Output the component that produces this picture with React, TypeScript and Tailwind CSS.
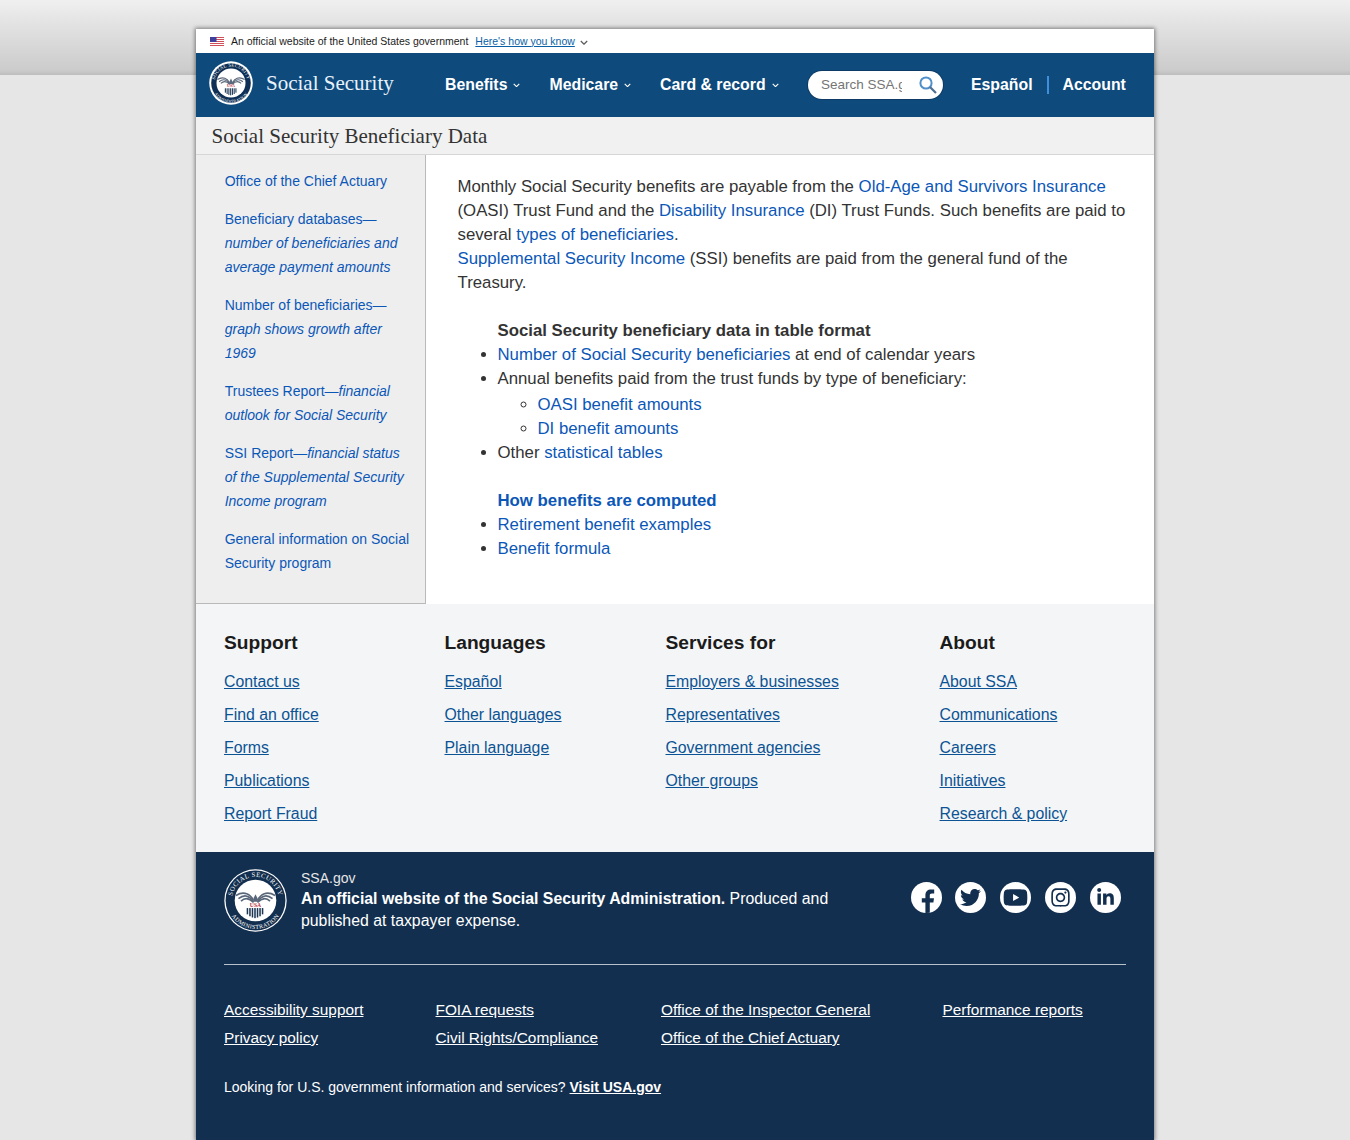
import React from "react";
import { FaTwitter, FaYoutube, FaInstagram, FaLinkedinIn } from "react-icons/fa";

const sans = "font-['Liberation_Sans',Arial,sans-serif]";
const serif = "font-['Liberation_Serif','Times_New_Roman',serif]";
const A = ({ children }: { children: React.ReactNode }) => (
  <a href="#" className="text-[#0b57b8]">{children}</a>
);

function Seal({ size, outer, small }: { size: number; outer: string; small?: boolean }) {
  const top = small ? "sealTopS" : "sealTop";
  const bot = small ? "sealBotS" : "sealBot";
  const feathers = [
    "M47 50 C42 40 32 34 19 42",
    "M47 52 C41 43 33 39 23 47",
    "M47 53 C41 47 34 44 27 51",
    "M53 50 C58 40 68 34 81 42",
    "M53 52 C59 43 67 39 77 47",
    "M53 53 C59 47 66 44 73 51",
  ];
  return (
    <svg width={size} height={size} viewBox="0 0 100 100" className="shrink-0">
      <circle cx="50" cy="50" r="49.5" fill="#fff" />
      <circle cx="50" cy="50" r={small ? 45 : 47.5} fill={outer} />
      <circle cx="50" cy="50" r="33" fill="#fff" />
      <defs>
        <path id={top} d="M 12.5 50 A 37.5 37.5 0 0 1 87.5 50" />
        <path id={bot} d="M 5 50 A 45 45 0 0 0 95 50" />
      </defs>
      <text fontSize="10.5" fill="#fff" fontFamily="'Liberation Serif',serif" letterSpacing="0.8">
        <textPath href={`#${top}`} startOffset="50%" textAnchor="middle">SOCIAL SECURITY</textPath>
      </text>
      <text fontSize="9.5" fill="#fff" fontFamily="'Liberation Serif',serif" letterSpacing="0.6">
        <textPath href={`#${bot}`} startOffset="50%" textAnchor="middle">ADMINISTRATION</textPath>
      </text>
      <g fill="none" stroke="#59677a" strokeWidth="2.6">
        {feathers.map((d) => <path key={d} d={d} />)}
      </g>
      <path d="M47 46 L50 40 L53 46 L53 52 L47 52 Z" fill="#59677a" />
      <text x="50" y="60" fontSize="9" fontWeight="700" textAnchor="middle" fill="#b3303f" fontFamily="'Liberation Serif',serif">USA</text>
      <g fill="#1c3554">
        <rect x="36" y="62" width="2.4" height="10" />
        <rect x="40" y="62" width="2.4" height="13" />
        <rect x="44" y="62" width="2.4" height="15" />
        <rect x="48" y="62" width="2.4" height="16" />
        <rect x="52" y="62" width="2.4" height="15" />
        <rect x="56" y="62" width="2.4" height="13" />
        <rect x="60" y="62" width="2.4" height="10" />
      </g>
    </svg>
  );
}

function Flag() {
  return (
    <svg width="14" height="10" viewBox="0 0 14 10" className="shrink-0">
      <rect width="14" height="10" fill="#fff" />
      {[0, 2, 4, 6, 8].map((y) => (
        <rect key={y} y={y} width="14" height="1" fill="#d0505a" />
      ))}
      <rect width="6.5" height="5" fill="#3f3f9e" />
    </svg>
  );
}

function Chevron({ color = "#fff", w = 7 }: { color?: string; w?: number }) {
  return (
    <svg width={w} height={w * 0.7} viewBox="0 0 10 7" fill="none" className="shrink-0">
      <path d="M1 1.2 L5 5.2 L9 1.2" stroke={color} strokeWidth="1.6" />
    </svg>
  );
}

const NavItem = ({ label, cls }: { label: string; cls: string }) => (
  <a href="#" className={`flex items-center gap-[6px] text-white font-bold text-[15.84px] ${cls}`}>
    {label}
    <Chevron />
  </a>
);

const Col = ({ title, links, w }: { title: string; links: string[]; w: string }) => (
  <div className={w}>
    <h3 className="text-[19.2px] font-bold leading-[24px] text-[#1b1b1b] mb-[10px]">{title}</h3>
    <ul className="flex flex-col">
      {links.map((l) => (
        <li key={l} className="leading-[33px] text-[15.84px]">
          <a href="#" className="underline text-[#0b5394]">{l}</a>
        </li>
      ))}
    </ul>
  </div>
);

const Social = ({ children }: { children: React.ReactNode }) => (
  <a href="#" className="w-[31px] h-[31px] rounded-full bg-white flex items-center justify-center text-[#132f4f] overflow-hidden">
    {children}
  </a>
);

export default function App() {
  return (
    <div className={`${sans} min-h-[1140px] bg-[#e6e6e6] bg-[linear-gradient(#f0f0f0_0,#e2e2e2_25px,#cccccc_70px,#bdbdbd_75px)] bg-no-repeat bg-[length:100%_75px] pt-[29px]`}>
      <div className="w-[958px] h-[1111px] mx-auto bg-white shadow-[0_0_4px_1px_rgba(0,0,0,0.45)] flex flex-col overflow-hidden">
        {/* gov banner */}
        <div className="h-[24px] bg-white flex items-center pl-[14px] pt-[1px] text-[10.5px] text-[#1b1b1b] shrink-0">
          <Flag />
          <span className="ml-[7px]">An official website of the United States government</span>
          <a href="#" className="ml-[7px] underline text-[#0b5fa5]">Here's how you know</a>
          <span className="ml-[5px] translate-y-[1px]"><Chevron color="#5c5c5c" w={8} /></span>
        </div>

        {/* header */}
        <header className="h-[64px] bg-[#0e4a7c] flex items-center shrink-0">
          <div className="ml-[13px] -mt-[4px]"><Seal size={44} outer="#0e2f56" small /></div>
          <a href="#" className={`${serif} ml-[13px] text-[21px] leading-[24px] -mt-[5px] text-[#e8f2fb] w-[179px]`}>Social Security</a>
          <nav className="flex items-center">
            <NavItem label="Benefits" cls="w-[104.5px]" />
            <NavItem label="Medicare" cls="w-[110.5px]" />
            <NavItem label="Card & record" cls="w-[148px]" />
          </nav>
          <div className="w-[135px] h-[28px] rounded-full bg-white flex items-center pl-[13px] pr-[5px] shadow-[0_0_0_1px_#0d3b66]">
            <span className="w-[81px] overflow-hidden whitespace-nowrap text-[13.5px] text-[#757575]">Search SSA.gov</span>
            <svg width="20" height="20" viewBox="0 0 20 20" fill="none" className="ml-[16px] shrink-0">
              <circle cx="8" cy="8" r="5.6" stroke="#4f8fcb" strokeWidth="2" />
              <path d="M12 12 L18 18" stroke="#4f6f90" strokeWidth="2.2" />
            </svg>
          </div>
          <a href="#" className="ml-[28px] text-white font-bold text-[15.84px]">Español</a>
          <span className="ml-[14px] w-[2px] h-[18px] bg-[#3f8fdc]" />
          <a href="#" className="ml-[14px] text-white font-bold text-[15.84px]">Account</a>
        </header>

        {/* title */}
        <div className="h-[38px] bg-[#f1f1f1] border-b border-[#d6d6d6] flex items-center pl-[15.5px] pt-[2px] shrink-0">
          <h1 className={`${serif} text-[21px] text-[#333]`}>Social Security Beneficiary Data</h1>
        </div>

        {/* main */}
        <div className="flex h-[449px] shrink-0">
          <aside className="w-[229.5px] bg-[#eeeeee] border-r border-b border-[#b9b9b9] pl-[28.7px] pr-[13.5px] pt-[14px] text-[14px] leading-[24px] text-[#0b57b8] shrink-0">
            <ul className="flex flex-col gap-[14px]">
              <li><a href="#">Office of the Chief Actuary</a></li>
              <li><a href="#">Beneficiary databases—<i>number of beneficiaries and average payment amounts</i></a></li>
              <li><a href="#">Number of beneficiaries—<i>graph shows growth after 1969</i></a></li>
              <li><a href="#">Trustees Report—<i>financial outlook for Social Security</i></a></li>
              <li><a href="#">SSI Report—<i>financial status of the Supplemental Security Income program</i></a></li>
              <li><a href="#">General information on Social Security program</a></li>
            </ul>
          </aside>
          <main className="flex-1 pl-[32px] pr-[28px] pt-[20px] text-[16.8px] leading-[24px] text-[#333]">
            <p>
              Monthly Social Security benefits are payable from the <A>Old-Age and Survivors Insurance</A> (OASI) Trust Fund and the <A>Disability Insurance</A> (DI) Trust Funds. Such benefits are paid to several <A>types of beneficiaries</A>.<br />
              <A>Supplemental Security Income</A> (SSI) benefits are paid from the general fund of the Treasury.
            </p>
            <ul className="mt-[24px] pl-[40px] list-disc">
              <li className="list-none font-bold">Social Security beneficiary data in table format</li>
              <li><A>Number of Social Security beneficiaries</A> at end of calendar years</li>
              <li>
                Annual benefits paid from the trust funds by type of beneficiary:
                <ul className="pl-[40px] list-[circle] mt-[2px]">
                  <li><A>OASI benefit amounts</A></li>
                  <li><A>DI benefit amounts</A></li>
                </ul>
              </li>
              <li>Other <A>statistical tables</A></li>
            </ul>
            <ul className="mt-[24px] pl-[40px] list-disc">
              <li className="list-none font-bold"><A>How benefits are computed</A></li>
              <li><A>Retirement benefit examples</A></li>
              <li><A>Benefit formula</A></li>
            </ul>
          </main>
        </div>

        {/* light footer */}
        <div className="h-[248px] bg-[#f4f5f6] pl-[28px] pt-[27px] flex shrink-0">
          <Col w="w-[220.5px]" title="Support" links={["Contact us", "Find an office", "Forms", "Publications", "Report Fraud"]} />
          <Col w="w-[221px]" title="Languages" links={["Español", "Other languages", "Plain language"]} />
          <Col w="w-[274px]" title="Services for" links={["Employers & businesses", "Representatives", "Government agencies", "Other groups"]} />
          <Col w="w-[200px]" title="About" links={["About SSA", "Communications", "Careers", "Initiatives", "Research & policy"]} />
        </div>

        {/* dark footer */}
        <footer className="flex-1 bg-[#132f4f] px-[28px] text-white">
          <div className="flex items-start pt-[17px] pb-[32px] border-b border-[#b8c2cc]">
            <Seal size={63} outer="#132f4f" />
            <div className="ml-[14px] w-[560px] text-[15.84px] leading-[22px] -mt-[1px]">
              <div className="text-[14px] leading-[20px] text-[#e6e6e6]">SSA.gov</div>
              <div><b>An official website of the Social Security Administration.</b> Produced and published at taxpayer expense.</div>
            </div>
            <div className="ml-auto mr-[5.5px] mt-[13px] flex gap-[13.75px]">
              <Social><span className="translate-x-[1px] translate-y-[3px]"><FaF /></span></Social>
              <Social><FaTwitter size={21} /></Social>
              <Social><FaYoutube size={25} /></Social>
              <Social><FaInstagram size={21} /></Social>
              <Social><FaLinkedinIn size={19} /></Social>
            </div>
          </div>
          <div className="flex mt-[31px] text-[15.4px] leading-[28px]">
            <div className="w-[211.5px] flex flex-col"><a href="#" className="underline">Accessibility support</a><a href="#" className="underline">Privacy policy</a></div>
            <div className="w-[225.5px] flex flex-col"><a href="#" className="underline">FOIA requests</a><a href="#" className="underline">Civil Rights/Compliance</a></div>
            <div className="w-[281.5px] flex flex-col"><a href="#" className="underline">Office of the Inspector General</a><a href="#" className="underline">Office of the Chief Actuary</a></div>
            <div className="flex flex-col"><a href="#" className="underline">Performance reports</a></div>
          </div>
          <p className="mt-[25px] text-[14px] leading-[20px]">
            Looking for U.S. government information and services? <a href="#" className="underline font-bold">Visit USA.gov</a>
          </p>
        </footer>
      </div>
    </div>
  );
}

function FaF() {
  return (
    <svg width="15" height="26" viewBox="0 0 15 26" fill="currentColor">
      <path d="M9.8 26 V14.6 H13.4 L14 10.3 H9.8 V7.6 C9.8 6.3 10.2 5.5 12 5.5 H14.2 V1.6 C13.8 1.5 12.5 1.4 11 1.4 C7.8 1.4 5.4 3.4 5.4 7.1 V10.3 H1.8 V14.6 H5.4 V26 Z" />
    </svg>
  );
}
